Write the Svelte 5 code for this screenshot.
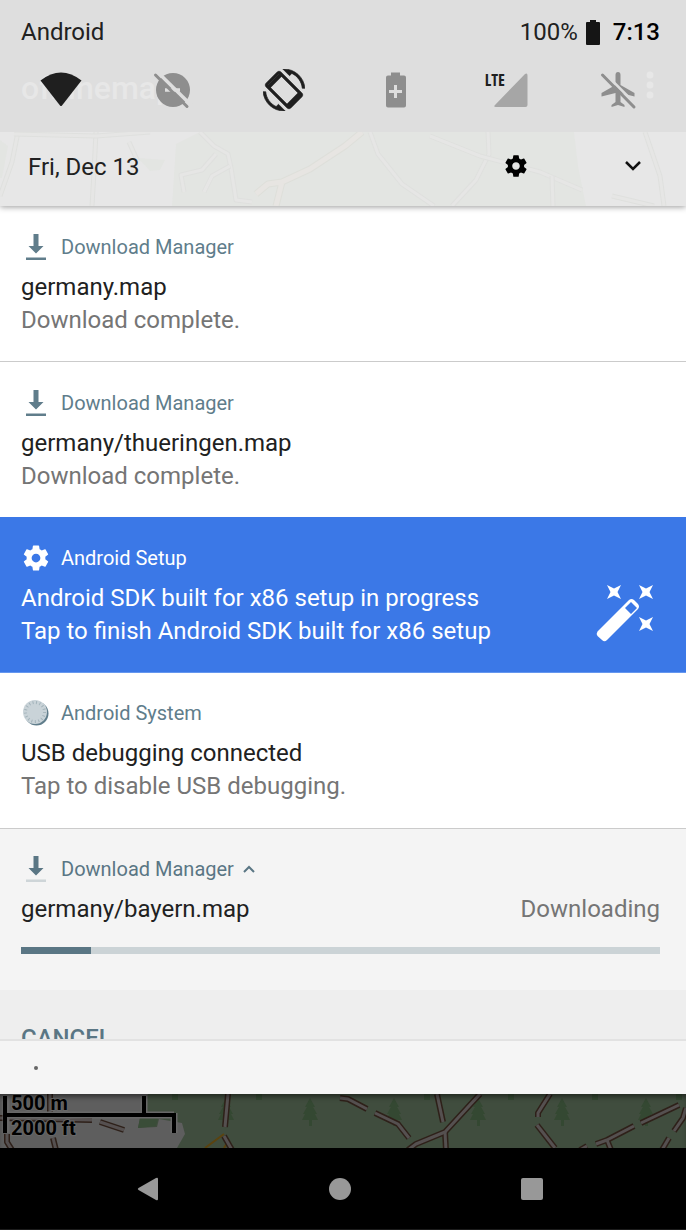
<script>
  const gear = 'M19.43 12.98c.04-.32.07-.64.07-.98s-.03-.66-.07-.98l2.11-1.65c.19-.15.24-.42.12-.64l-2-3.46c-.12-.22-.39-.3-.61-.22l-2.49 1c-.52-.4-1.08-.73-1.69-.98l-.38-2.65C14.46 2.18 14.25 2 14 2h-4c-.25 0-.46.18-.49.42l-.38 2.65c-.61.25-1.17.59-1.69.98l-2.49-1c-.23-.09-.49 0-.61.22l-2 3.46c-.13.22-.07.49.12.64l2.11 1.65c-.04.32-.07.65-.07.98s.03.66.07.98l-2.11 1.65c-.19.15-.24.42-.12.64l2 3.46c.12.22.39.3.61.22l2.49-1c.52.4 1.08.73 1.69.98l.38 2.65c.03.24.24.42.49.42h4c.25 0 .46-.18.49-.42l.38-2.65c.61-.25 1.17-.59 1.69-.98l2.49 1c.23.09.49 0 .61-.22l2-3.46c.12-.22.07-.49-.12-.64l-2.11-1.65zM12 15.5c-1.93 0-3.5-1.57-3.5-3.5s1.57-3.5 3.5-3.5 3.5 1.57 3.5 3.5-1.57 3.5-3.5 3.5z';

  const notifications = [
    { icon: 'download', app: 'Download Manager', title: 'germany.map', text: 'Download complete.', line: true },
    { icon: 'download', app: 'Download Manager', title: 'germany/thueringen.map', text: 'Download complete.' },
    { icon: 'gear', app: 'Android Setup', title: 'Android SDK built for x86 setup in progress', text: 'Tap to finish Android SDK built for x86 setup', tone: 'setup', line: true },
    { icon: 'system', app: 'Android System', title: 'USB debugging connected', text: 'Tap to disable USB debugging.', tone: 'system', line: true }
  ];

  const roads = [
    'M-2 24 L92 26',
    'M100 28 L124 36',
    'M50 0 V18',
    'M7 40 V48 L12 56',
    'M53 44 L56 56',
    'M228 0 L225 33',
    'M224 42 L232 56',
    'M340 4 L348 5 L367 15',
    'M375 19 L398 30 L409 44',
    'M437 0 L443 28',
    'M480 0 L445 38 L416 50 L408 56',
    'M445 38 L446 56',
    'M550 0 L538 19 V23',
    'M537 31 L555 54',
    'M596 50 L607 46 L634 32',
    'M607 46 L611 56',
    'M641 29 L679 11',
    'M686 14 L683 24 L674 37',
    'M669 44 L662 56',
    'M580 56 L587 52'
  ];
  const trees = [226, 310, 394, 478, 562, 646];
  const stubs = [175, 259, 427, 511, 595, 679];
  const lanes = [
    'M18 0 L12 30 L0 64',
    'M96 0 L94 40 L92 74',
    'M14 2 L96 4 L150 0',
    'M129 10 L138 30',
    'M200 0 L214 14 L228 22 L231 36 L236 68 L252 70',
    'M230 34 L212 44 L204 60',
    'M184 60 L181 43 L202 38 L216 22',
    'M370 0 L378 22 L402 52 L434 74',
    'M488 0 L489 22 L476 48 L452 74',
    'M430 4 L480 24 L540 40 L582 58',
    'M645 0 L660 44 L664 74',
    'M552 44 L553 74',
    'M612 64 L654 74'
  ];
</script>

{#snippet download(faint)}
  <svg viewBox="1 0 28 28" width="28" height="28" aria-hidden="true">
    <path d="M12.500 1h5v12h5l-7.500 7.500L7.500 13h5z" fill="currentColor" />
    <path d="M5 24.500h20v2.500H5z" fill="currentColor" opacity={faint ? 0.25 : 1} />
  </svg>
{/snippet}

<div class="screen">
  <header class="top">
    <span class="ghost" aria-hidden="true">offlinemap</span>
    <svg class="ghost-menu" viewBox="0 0 8 28" width="8" height="28" aria-hidden="true">
      <g fill="#e7e7e7"><circle cx="4" cy="4" r="3.500" /><circle cx="4" cy="14" r="3.500" /><circle cx="4" cy="24" r="3.500" /></g>
    </svg>
    <div class="status">
      <span class="carrier">Android</span>
      <span>100%</span>
      <svg viewBox="0 0 14 25" width="14" height="25" aria-hidden="true">
        <path d="M4 0h6v2h3q1 0 1 1v21q0 1-1 1H1q-1 0-1-1V3q0-1 1-1h3z" fill="#151515" />
      </svg>
      <time>7:13</time>
    </div>
    <div class="tiles">
      <button aria-label="Wi-Fi">
        <svg viewBox="0 0 44 44" width="44" height="44"><path d="M1.500 12.500Q22-3.500 42.500 12.500L23 37.500q-1 1-2 0z" fill="#1f1f1f" /></svg>
      </button>
      <button aria-label="Do not disturb">
        <svg viewBox="0 0 44 44" width="44" height="44">
          <circle cx="23" cy="22" r="17" fill="#8e8e8e" />
          <path d="M15 22h15" stroke="#dedede" stroke-width="3.500" />
          <path d="M8 4.500L41 37" stroke="#dedede" stroke-width="3.500" />
          <path d="M5.500 7L37 38.500" stroke="#8e8e8e" stroke-width="3" stroke-linecap="round" />
        </svg>
      </button>
      <button aria-label="Auto-rotate">
        <svg viewBox="0 0 24 24" width="42" height="42"><path fill="#1f1f1f" stroke="#1f1f1f" stroke-width=".4" d="M16.480 2.520c3.270 1.550 5.610 4.720 5.970 8.480h1.500C23.440 4.840 18.290 0 12 0l-.66.030 3.810 3.810 1.330-1.320zm-6.250-.77c-.59-.59-1.540-.59-2.120 0L1.750 8.110c-.59.59-.59 1.540 0 2.120l12.020 12.020c.59.590 1.540.590 2.120 0l6.360-6.360c.59-.59.59-1.540 0-2.120L10.230 1.750zm4.600 19.440L2.810 9.170l6.360-6.360 12.020 12.020-6.360 6.360zm-7.310.29C4.250 19.940 1.910 16.760 1.550 13H.05C.56 19.160 5.710 24 12 24l.66-.03-3.810-3.810-1.330 1.320z" /><path d="M2 10l7.500-7.500 1.500 1.500-7.500 7.500zM13 20.500l7.500-7.500 1.500 1.500-7.500 7.500z" fill="#1f1f1f" /></svg>
      </button>
      <button aria-label="Battery saver">
        <svg viewBox="0 0 44 44" width="44" height="44">
          <path d="M18 4.500h9v3h4q2 0 2 2v28q0 2-2 2H15q-2 0-2-2V9.500q0-2 2-2h3z" fill="#8e8e8e" />
          <path d="M22.500 17v13M16 23.500h13" stroke="#dedede" stroke-width="3" />
        </svg>
      </button>
      <button class="cell" aria-label="Mobile data">
        <svg viewBox="0 0 44 44" width="44" height="44"><path d="M40 6q2.500-1.500 2.500 1.500V37q0 2-2 2H11q-3 0-1-2z" fill="#a6a6a6" /></svg>
        <span>LTE</span>
      </button>
      <button aria-label="Airplane mode">
        <svg viewBox="0 0 44 44" width="44" height="44">
          <path d="M19.500 7q0-3 2.500-3t2.500 3v10l14 8v3.500L24.500 25v9l4 3v2L22 37l-6.500 2v-2l4-3v-9L5.500 28.500V25l14-8z" fill="#8e8e8e" />
          <path d="M8 4.500L41 37.500" stroke="#dedede" stroke-width="2.500" />
          <path d="M6.500 7L38 39" stroke="#8e8e8e" stroke-width="3" stroke-linecap="round" />
        </svg>
      </button>
    </div>
  </header>

  <div class="date">
    <svg class="backdrop" viewBox="0 0 686 74" preserveAspectRatio="xMidYMin slice" aria-hidden="true">
      <path d="M0 8 8 14 2 46H0zM176 12 200 0H574L578 34 586 74H172z" fill="#e3e5e2" />
      <path d="M138 26 165 28 160 38 150 39z" fill="#e3e5e2" />
      <g fill="none" stroke-linejoin="round">
        {#each lanes as d}<path {d} stroke="#dfe0de" stroke-width="5" /><path {d} stroke="#e6e6e5" stroke-width="3" />{/each}
        <path d="M276 74 282 50 310 37 345 14 362 0M282 50 268 52 256 62" stroke="#dedfda" stroke-width="7" />
        <path d="M276 74 282 50 310 37 345 14 362 0M282 50 268 52 256 62" stroke="#e7e5e2" stroke-width="5" />
      </g>
    </svg>
    <time>Fri, Dec 13</time>
    <button class="settings" aria-label="Settings">
      <svg viewBox="0 0 24 24" width="26" height="26"><path d={gear} fill="#000" /></svg>
    </button>
    <button class="expand" aria-label="Expand quick settings">
      <svg viewBox="0 0 18 12" width="18" height="12"><path d="M2 2l7 7 7-7" fill="none" stroke="#111" stroke-width="2.500" /></svg>
    </button>
  </div>

  <main>
    {#each notifications as n}
      <article class={n.tone} class:line={n.line}>
        <div class="body">
          <div class="app">
            {#if n.icon === 'download'}
              {@render download(false)}
            {:else if n.icon === 'gear'}
              <svg viewBox="0 0 24 24" width="30" height="30" aria-hidden="true"><path d={gear} fill="#fff" /></svg>
            {:else}
              <svg viewBox="0 0 28 28" width="28" height="28" aria-hidden="true">
                <circle cx="14.500" cy="14.500" r="12" fill="#607d8b" />
                <circle cx="13" cy="13" r="12" fill="#c9d3d8" />
                <circle cx="13" cy="13" r="9.500" fill="none" stroke="#a3b3ba" stroke-width="3" stroke-dasharray="1 2.500" />
              </svg>
            {/if}
            <span>{n.app}</span>
          </div>
          <h2>{n.title}</h2>
          <p>{n.text}</p>
        </div>
        {#if n.tone === 'setup'}
          <svg class="wand" viewBox="0 0 60 60" width="60" height="60" aria-hidden="true">
            <path fill="#fff" fill-rule="evenodd" d="M2.500 48.500 34 17q2.500-2 5 0l4 4q2 2.500 0 5L12 57q-2.500 2.500-5 0l-4.500-4q-1.500-2.500 0-4.500zM30 25l6 6 6-6-6-6z" />
            <g fill="#fff">
              {#each [[19, 9], [51, 9], [51, 41]] as [x, y]}
                <path d="M-7-7 0-3.500 7-7 3.500 0 7 7 0 3.500-7 7-3.500 0z" transform="translate({x} {y})" />
              {/each}
            </g>
          </svg>
        {/if}
      </article>
    {/each}

    <article class="ongoing">
      <div class="body">
        <div class="app">
          {@render download(true)}
          <span>Download Manager</span>
          <button aria-label="Collapse">
            <svg viewBox="0 0 12 8" width="12" height="8"><path d="M1 7l5-5 5 5" fill="none" stroke="currentColor" stroke-width="2" /></svg>
          </button>
        </div>
        <div class="row"><h2>germany/bayern.map</h2><p>Downloading</p></div>
        <progress value="11" max="100" aria-label="Download progress"></progress>
      </div>
    </article>
    <div class="actions"><button>CANCEL</button></div>
    <div class="shelf"><i></i></div>
  </main>

  <div class="map">
    <svg viewBox="0 0 686 54" preserveAspectRatio="xMinYMin slice" aria-hidden="true">
      <rect width="686" height="54" fill="#404d3e" />
      <path d="M0 0H148L140 24 138 34 157 33 159 25 182 29 185 40 177 54H0z" fill="#5e5e5e" />
      <path d="M140 24h18l-2 8-18 2z" fill="#3a4d38" />
      <g fill="#344832">
        {#each trees as x}<path d="M{x} 4l5 9h-2l4 7h-2l3 6h-6v6h-3v-6h-7l3-6h-2l4-7h-2z" />{/each}
        {#each stubs as x}<path d="M{x - 3} 0h6v6h-6z" />{/each}
      </g>
      <path d="M205 54 224 40M224 54 229 46" stroke="#5b430f" stroke-width="2" />
      <g fill="none" stroke-linejoin="round">
        {#each roads as d}<path {d} stroke="#2e2019" stroke-width="6" />{/each}
        {#each roads as d}<path {d} stroke="#555050" stroke-width="3" />{/each}
      </g>
      <path d="M6 2V39M6 21H174M144 2V21M174 19V39" stroke="#686868" stroke-width="7" fill="none" />
      <path d="M5 2V39M4 21H176M144 2V21M174 19V39" stroke="#000" stroke-width="4" fill="none" />
      <g class="scale"><text x="11" y="16">500 m</text><text x="11" y="41">2000 ft</text></g>
    </svg>
  </div>

  <nav>
    <button aria-label="Back"><svg viewBox="0 0 24 24" width="24" height="24"><path d="M20 1q2-1 2 1v20q0 2-2 1L2.500 13q-1.500-1 0-2z" fill="#989898" /></svg></button>
    <button aria-label="Home"><svg viewBox="0 0 24 24" width="24" height="24"><circle cx="12" cy="12" r="11" fill="#989898" /></svg></button>
    <button aria-label="Overview"><svg viewBox="0 0 24 24" width="24" height="24"><rect x="1" y="1" width="22" height="22" rx="2" fill="#989898" /></svg></button>
  </nav>
</div>

<style>
  :global(body) { margin: 0; background: #000; }
  .screen { display: flex; flex-direction: column; min-height: 100vh; font-family: Roboto, sans-serif; font-size: 24px; color: #212121; }
  button { display: flex; align-items: center; justify-content: center; padding: 0; border: 0; background: none; font: inherit; color: inherit; }
  svg { display: block; flex: none; }
  h2, p { margin: 0; font-size: 24px; font-weight: 400; line-height: 33px; }

  .top { position: relative; z-index: 2; background: #dedede; padding-bottom: 16px; }
  .status { position: relative; display: flex; align-items: center; gap: 8px; height: 64px; padding: 0 26px 0 21px; }
  .carrier { flex: 1; }
  .status time { margin-left: 5px; font-weight: 500; color: #000; }
  .tiles { position: relative; display: grid; grid-template-columns: repeat(6, 1fr); height: 52px; padding: 0 12px 0 5px; }
  .cell { position: relative; }
  .cell span { position: absolute; left: 50%; top: 6px; margin-left: -22px; font-family: "Open Sans", sans-serif; font-size: 16px; line-height: 20px; font-weight: 700; font-stretch: 75%; color: #1f1f1f; }
  .ghost { position: absolute; left: 21px; top: 68px; font-size: 32px; line-height: 40px; font-weight: 500; color: #e7e7e7; }
  .ghost-menu { position: absolute; right: 32px; top: 71px; }

  .date { position: relative; z-index: 1; display: flex; align-items: center; height: 74px; padding: 0 44px 0 28px; background: #e7e7e7; box-shadow: 0 1px 6px rgba(0, 0, 0, 0.4); }
  .date time { position: relative; flex: 1; line-height: 28px; padding-bottom: 4px; }
  .date button { position: relative; padding-bottom: 6px; }
  .settings { margin-right: 95px; }
  .backdrop { position: absolute; inset: 0; width: 100%; height: 100%; }

  article { display: flex; align-items: center; padding: 25px 26px 24px 21px; background: #fff; }
  .system, .ongoing { padding-top: 24px; padding-bottom: 25px; }
  .line { border-bottom: 1px solid #cbcbcb; }
  .body { flex: 1; min-width: 0; }
  .app { display: flex; align-items: center; height: 32px; margin-bottom: 8px; font-size: 20px; color: #607d8b; }
  .app > svg:first-child { width: 30px; }
  .app span { margin-left: 10px; }
  .app button { margin-left: 9px; }
  article p { color: #757575; }
  .setup { background: #3b78e7; border-color: #6597ef; }
  .setup h2, .setup p, .setup .app { color: #fff; }
  .wand { align-self: flex-end; margin-right: 5px; margin-bottom: 5px; }
  .ongoing { background: #f4f4f4; padding-bottom: 36px; }
  .ongoing .app { color: #5a7684; }
  .row { display: flex; justify-content: space-between; }
  progress { display: block; width: 100%; height: 7px; margin-top: 21px; appearance: none; border: 0; background: #cbd3d6; }
  progress::-webkit-progress-bar { background: #cbd3d6; }
  progress::-webkit-progress-value { background: #5a7684; }
  .actions { height: 49px; overflow: hidden; padding: 0 21px; background: #eee; border-bottom: 2px solid #e2e2e2; }
  .actions button { padding-top: 34px; line-height: 28px; font-size: 24px; font-weight: 500; color: #5a7684; }
  .shelf { display: flex; align-items: center; height: 53px; padding-left: 34px; background: #f5f5f5; }
  .shelf i { width: 4px; height: 4px; border-radius: 2px; background: #666; }

  .map { position: relative; height: 54px; }
  .map svg { width: 100%; height: 100%; }
  .map::after { content: ""; position: absolute; inset: 0; box-shadow: inset 0 5px 5px -2px rgba(0, 0, 0, 0.45); }
  .scale { font-size: 20px; font-weight: 700; fill: #000; stroke: #686868; stroke-width: 2px; paint-order: stroke; }

  nav { flex: 1; display: flex; align-items: center; justify-content: center; gap: 168px; min-height: 81px; padding-right: 6px; background: #000; border-bottom: 1px solid #1c1c1c; }
</style>
